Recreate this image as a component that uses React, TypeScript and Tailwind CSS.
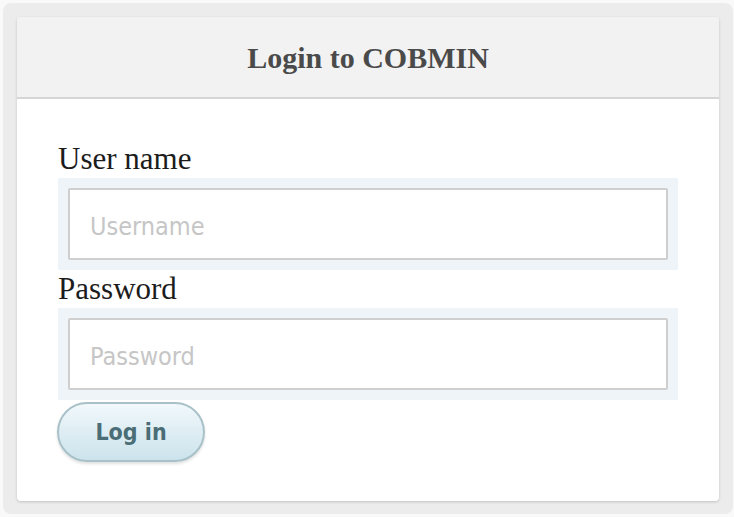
import React from "react";

const serif = { fontFamily: '"Liberation Serif", "Times New Roman", serif' };
const sans = { fontFamily: '"DejaVu Sans Condensed", "DejaVu Sans", Tahoma, sans-serif' };

function Field({ label, placeholder, type }: { label: string; placeholder: string; type: string }) {
  return (
    <div className="flex flex-col">
      <label className="text-[31px] leading-[30px] text-[#1c1c1c]" style={serif}>
        {label}
      </label>
      <div className="mt-[4px] bg-[#eef4f7] p-[10px]">
        <input
          type={type}
          placeholder={placeholder}
          className="block h-[72px] w-full rounded-[2px] border-2 border-[#cfcfcf] bg-white px-[20px] pt-[5px] text-[25px] text-[#333] outline-none placeholder:text-[#c6c6c6]"
          style={sans}
        />
      </div>
    </div>
  );
}

export default function App() {
  return (
    <div className="min-h-[517px] w-[734px] bg-[#f9f9f9] pb-[2px] pl-[3px] pr-[1px] pt-[3px]">
      <div className="rounded-[8px] bg-[#ececec] px-[14px] pb-[13px] pt-[14px]">
        <div className="overflow-hidden rounded-[4px] bg-white shadow-[0_1px_3px_rgba(0,0,0,0.18)]">
          <div className="flex h-[82px] items-center justify-center border-b-2 border-[#d6d6d6] bg-[#f2f2f2]">
            <h1 className="text-[30px] font-bold text-[#4a4a4a]" style={serif}>
              Login to COBMIN
            </h1>
          </div>
          <div className="flex flex-col px-[41px] pb-[39px] pt-[45px]">
            <Field label="User name" placeholder="Username" type="text" />
            <div className="mt-[4px]">
              <Field label="Password" placeholder="Password" type="password" />
            </div>
            <div className="mt-[2px]">
              <button
                className="h-[60px] w-[148px] -ml-[1px] rounded-full border-2 border-[#a8c1c8] bg-gradient-to-b from-[#f1f8fb] to-[#cce3ec] text-[23px] font-bold text-[#4a6d76] shadow-[0_2px_3px_rgba(0,0,0,0.12)]"
                style={sans}
              >
                Log in
              </button>
            </div>
          </div>
        </div>
      </div>
    </div>
  );
}
